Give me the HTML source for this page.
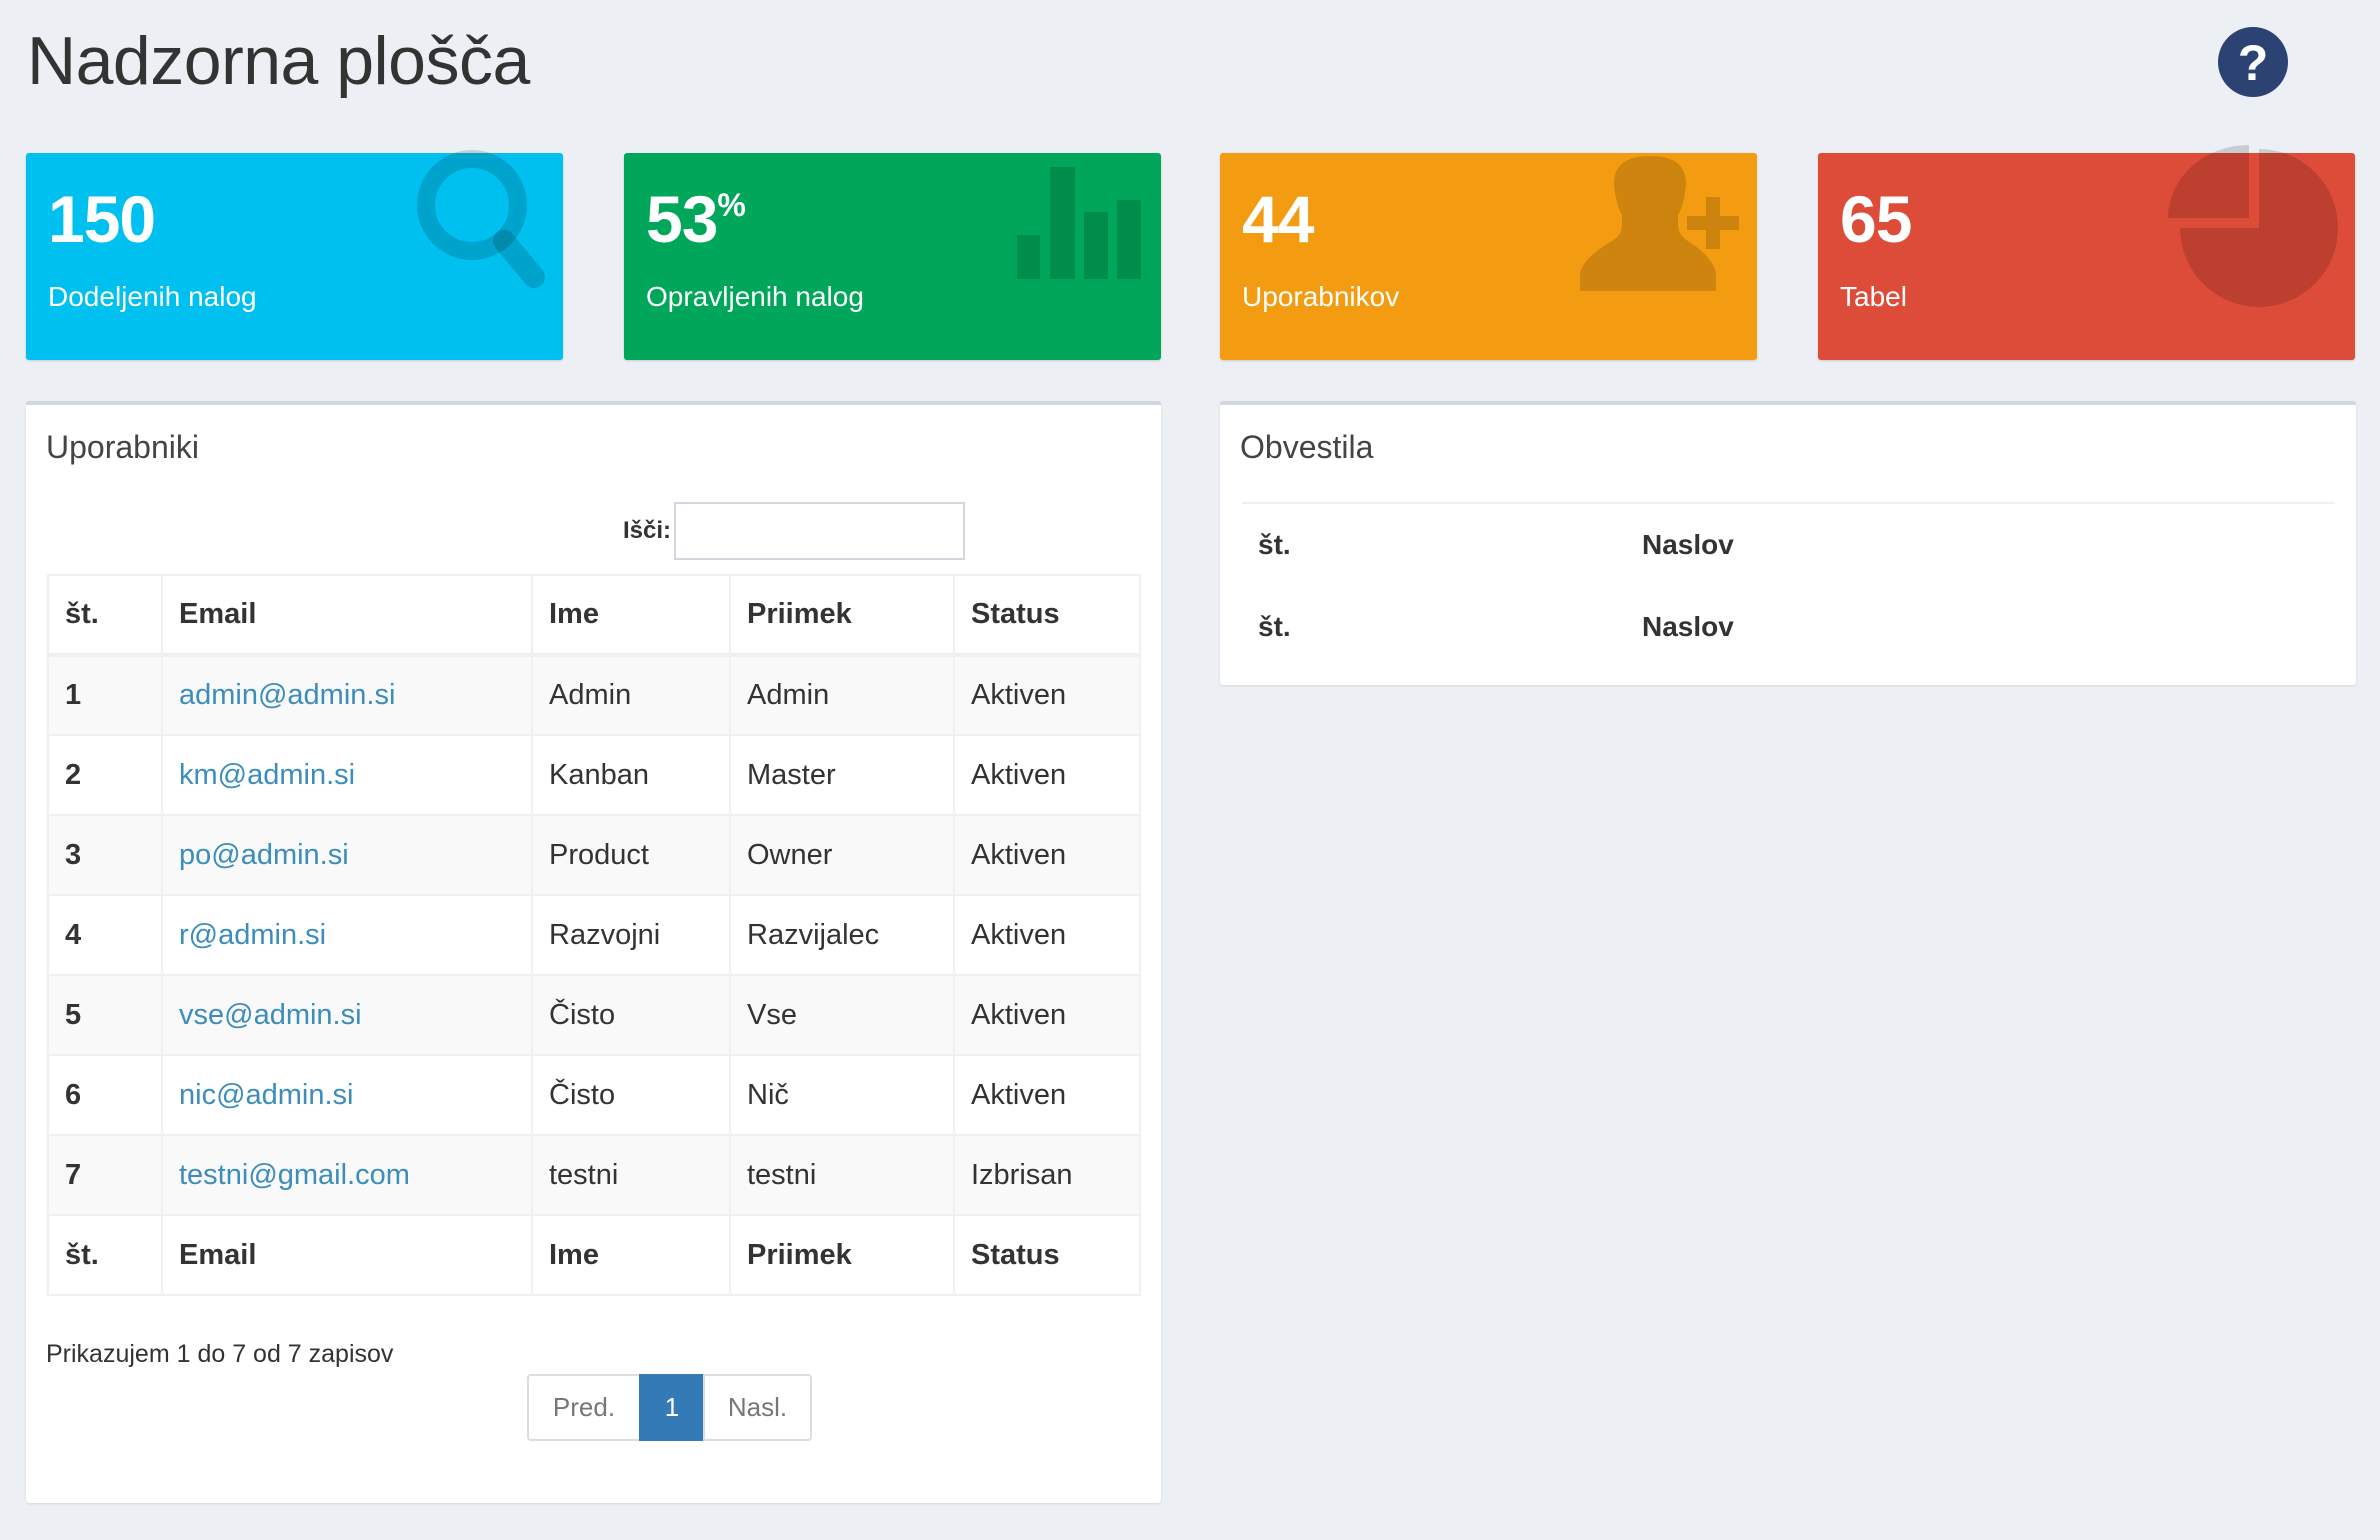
<!DOCTYPE html>
<html><head><meta charset="utf-8"><style>
*{box-sizing:border-box;margin:0;padding:0}
body{width:2380px;height:1540px;background:#ecf0f5;font-family:"Liberation Sans",sans-serif;color:#333;position:relative;overflow:hidden}
.abs{position:absolute}
h1{position:absolute;left:27px;top:22px;font-size:68px;font-weight:normal;color:#333;letter-spacing:-0.5px}
.box{position:absolute;top:153px;height:207px;width:537px;border-radius:3px;color:#fff;box-shadow:0 1px 2px rgba(0,0,0,.15)}
.box .n{position:absolute;left:22px;top:28px;font-size:66px;font-weight:bold;letter-spacing:-1px}
.box .n sup{font-size:32px;vertical-align:top;position:relative;top:6px}
.box .l{position:absolute;left:22px;top:128px;font-size:28px}
.box svg{position:absolute;overflow:visible}
.panel{position:absolute;background:#fff;border-top:4px solid #d2d6de;border-radius:3px;box-shadow:0 1px 2px rgba(0,0,0,.1)}
.ptitle{position:absolute;left:20px;top:24px;font-size:32px;color:#444}
table{position:absolute;border-collapse:collapse;font-size:29px}
td,th{border:2px solid #f0f0f0;text-align:left;padding:0 16px;height:80px;white-space:nowrap}
th{font-weight:bold}
thead th{border-bottom:4px solid #f0f0f0}
tbody tr:nth-child(odd){background:#f9f9f9}
a{color:#3c8dbc;text-decoration:none}
.pg{position:absolute;top:1374px;height:67px;border:2px solid #ddd;background:#fff;color:#777;font-size:26px;display:flex;align-items:center;justify-content:center}
</style></head><body>
<h1>Nadzorna plošča</h1>
<svg class="abs" style="left:2218px;top:27px" width="70" height="70" viewBox="0 0 70 70"><circle cx="35" cy="35" r="35" fill="#2c4273"/><text x="35" y="53" text-anchor="middle" font-family="Liberation Sans" font-weight="bold" font-size="50" fill="#fff">?</text></svg>

<div class="box" style="left:26px;background:#00c0ef">
<div class="n">150</div><div class="l">Dodeljenih nalog</div>
<svg style="left:376px;top:0" width="160" height="140"><circle cx="70" cy="52" r="46" fill="none" stroke="rgba(0,0,0,.15)" stroke-width="18"/><line x1="102" y1="88" x2="132" y2="124" stroke="rgba(0,0,0,.15)" stroke-width="22" stroke-linecap="round"/></svg>
</div>
<div class="box" style="left:624px;background:#00a65a">
<div class="n">53<sup>%</sup></div><div class="l">Opravljenih nalog</div>
<svg style="left:0;top:0" width="537" height="207"><g fill="rgba(0,0,0,.15)"><rect x="393" y="82" width="23" height="44"/><rect x="426" y="14" width="25" height="112"/><rect x="460" y="59" width="24" height="67"/><rect x="493" y="47" width="24" height="79"/></g></svg>
</div>
<div class="box" style="left:1220px;background:#f39c12">
<div class="n">44</div><div class="l">Uporabnikov</div>
<svg style="left:0;top:0" width="537" height="207"><g fill="#000" opacity=".15"><path d="M360 138 L360 120 Q364 104 392 88 Q402 82 402 72 L402 62 Q396 52 394 32 Q393 3 430 3 Q467 3 466 32 Q464 52 458 62 L458 72 Q458 82 468 88 Q493 104 496 120 L496 138 Z"/><rect x="486" y="44" width="14" height="52"/><rect x="467" y="63" width="52" height="14"/></g></svg>
</div>
<div class="box" style="left:1818px;background:#dd4b39">
<div class="n">65</div><div class="l">Tabel</div>
<svg style="left:0;top:0" width="537" height="207"><g fill="rgba(0,0,0,.15)"><path d="M441 -4 A79 79 0 1 1 362 75 L441 75 Z"/><path d="M431 -8 L431 65 L350 65 A81 73 0 0 1 431 -8 Z"/></g></svg>
</div>

<div class="panel" style="left:26px;top:401px;width:1135px;height:1102px">
<div class="ptitle">Uporabniki</div>
<div class="abs" style="left:597px;top:112px;font-size:24px;font-weight:bold">Išči:</div>
<div class="abs" style="left:648px;top:97px;width:291px;height:58px;border:2px solid #d2d6de"></div>
<table style="left:21px;top:169px;width:1094px">
<colgroup><col style="width:114px"><col style="width:370px"><col style="width:198px"><col style="width:224px"><col></colgroup>
<thead><tr><th>št.</th><th>Email</th><th>Ime</th><th>Priimek</th><th>Status</th></tr></thead>
<tbody>
<tr><th>1</th><td><a>admin@admin.si</a></td><td>Admin</td><td>Admin</td><td>Aktiven</td></tr>
<tr><th>2</th><td><a>km@admin.si</a></td><td>Kanban</td><td>Master</td><td>Aktiven</td></tr>
<tr><th>3</th><td><a>po@admin.si</a></td><td>Product</td><td>Owner</td><td>Aktiven</td></tr>
<tr><th>4</th><td><a>r@admin.si</a></td><td>Razvojni</td><td>Razvijalec</td><td>Aktiven</td></tr>
<tr><th>5</th><td><a>vse@admin.si</a></td><td>Čisto</td><td>Vse</td><td>Aktiven</td></tr>
<tr><th>6</th><td><a>nic@admin.si</a></td><td>Čisto</td><td>Nič</td><td>Aktiven</td></tr>
<tr><th>7</th><td><a>testni@gmail.com</a></td><td>testni</td><td>testni</td><td>Izbrisan</td></tr>
</tbody>
<tfoot><tr><th>št.</th><th>Email</th><th>Ime</th><th>Priimek</th><th>Status</th></tr></tfoot>
</table>
<div class="abs" style="left:20px;top:935px;font-size:25px">Prikazujem 1 do 7 od 7 zapisov</div>
</div>
<div class="pg" style="left:527px;width:114px;border-radius:4px 0 0 4px">Pred.</div>
<div class="pg" style="left:639px;width:66px;background:#337ab7;border-color:#337ab7;color:#fff">1</div>
<div class="pg" style="left:703px;width:109px;border-radius:0 4px 4px 0">Nasl.</div>

<div class="panel" style="left:1220px;top:401px;width:1136px;height:284px">
<div class="ptitle">Obvestila</div>
<div class="abs" style="left:22px;top:97px;width:1093px;height:2px;background:#f0f0f0"></div>
<div class="abs" style="left:38px;top:124px;font-size:28px;font-weight:bold">št.</div>
<div class="abs" style="left:422px;top:124px;font-size:28px;font-weight:bold">Naslov</div>
<div class="abs" style="left:38px;top:206px;font-size:28px;font-weight:bold">št.</div>
<div class="abs" style="left:422px;top:206px;font-size:28px;font-weight:bold">Naslov</div>
</div>
</body></html>
